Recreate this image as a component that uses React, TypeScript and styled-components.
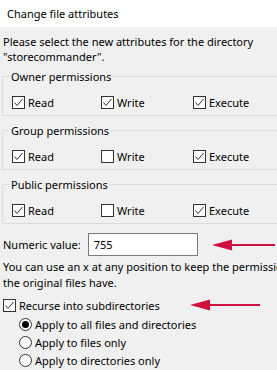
import styled, { createGlobalStyle } from 'styled-components';

const GlobalStyle = createGlobalStyle`
    html, body {
        margin: 0;
        padding: 0;
        background: #f0f0f0;
    }
    body {
        font-family: 'Noto Sans', 'Open Sans', sans-serif;
        font-size: 11px;
        color: #000;
    }
`;

interface CheckProps {
    checked?: boolean;
}

const CheckBox: React.FC<CheckProps> = ({ checked }) => (
    <Box>
        {checked && (
            <svg width="11" height="11" viewBox="0 0 11 11">
                <polyline points="1.5,5.5 4,8.5 9.5,2" fill="none" stroke="#333" strokeWidth="1" />
            </svg>
        )}
    </Box>
);

const Check: React.FC<{ label: string; checked?: boolean }> = ({ label, checked }) => (
    <CheckLabel>
        <CheckBox checked={checked} />
        <span>{label}</span>
    </CheckLabel>
);

const Arrow: React.FC<{ width: number }> = ({ width }) => (
    <svg width={width} height="12" viewBox={`0 0 ${width} 12`}>
        <line x1="16" y1="6" x2={width} y2="6" stroke="#d1103f" strokeWidth="2" />
        <polygon points="0,6 20,0.5 20,11.5" fill="#d1103f" />
    </svg>
);

const perms = [
    { title: 'Owner permissions', read: true, write: true, exec: true },
    { title: 'Group permissions', read: true, write: false, exec: true },
    { title: 'Public permissions', read: true, write: false, exec: true },
];

const App: React.FC = () => {
    return (
        <Window>
            <GlobalStyle />
            <TitleBar>Change file attributes</TitleBar>
            <Content>
                <Intro>
                    Please select the new attributes for the directory
                    <br />
                    "storecommander".
                </Intro>
                {perms.map((p) => (
                    <Group key={p.title}>
                        <Legend>{p.title}</Legend>
                        <CheckRow>
                            <Check label="Read" checked={p.read} />
                            <Check label="Write" checked={p.write} />
                            <Check label="Execute" checked={p.exec} />
                        </CheckRow>
                    </Group>
                ))}
                <NumericRow>
                    <span>Numeric value:</span>
                    <NumInput>755</NumInput>
                    <ArrowWrap $left={7}>
                        <Arrow width={63} />
                    </ArrowWrap>
                </NumericRow>
                <Help>
                    You can use an x at any position to keep the permission
                    <br />
                    the original files have.
                </Help>
                <RecurseRow>
                    <Check label="Recurse into subdirectories" checked />
                    <ArrowWrap $left={30}>
                        <Arrow width={70} />
                    </ArrowWrap>
                </RecurseRow>
                <RadioList>
                    <RadioItem>
                        <Radio $on />
                        <span>Apply to all files and directories</span>
                    </RadioItem>
                    <RadioItem>
                        <Radio />
                        <span>Apply to files only</span>
                    </RadioItem>
                    <RadioItem>
                        <Radio />
                        <span>Apply to directories only</span>
                    </RadioItem>
                </RadioList>
            </Content>
        </Window>
    );
};

export default App;

const Window = styled.div`
    width: 277px;
    height: 370px;
    overflow: hidden;
    background: #f0f0f0;
`;

const TitleBar = styled.div`
    height: 27px;
    background: #fff;
    display: flex;
    align-items: center;
    padding-left: 7px;
`;

const Content = styled.div`
    padding: 7px 0 0 2px;
    width: 300px;
`;

const Intro = styled.div`
    line-height: 15px;
    white-space: nowrap;
    padding-left: 1px;
`;

const Group = styled.fieldset`
    margin: 5px 0 0 0;
    width: 300px;
    box-sizing: border-box;
    border: 1px solid #dcdcdc;
    padding: 0 0 5px 6px;
    & + & {
        margin-top: 7px;
    }
`;

const Legend = styled.legend`
    padding: 0 2px;
    line-height: 15px;
`;

const CheckRow = styled.div`
    display: grid;
    grid-template-columns: 89px 92px auto;
    margin: 10px 0 0 3px;
`;

const CheckLabel = styled.label`
    display: flex;
    align-items: center;
    gap: 3px;
    height: 16px;
    white-space: nowrap;
`;

const Box = styled.span`
    width: 11px;
    height: 11px;
    border: 1px solid #333;
    background: #fff;
    display: flex;
    align-items: center;
    justify-content: center;
`;

const NumericRow = styled.div`
    display: flex;
    align-items: center;
    margin-top: 9px;
    padding-left: 1px;
    gap: 7px;
`;

const NumInput = styled.div`
    width: 103px;
    height: 21px;
    border: 1px solid #7a7a7a;
    background: #fff;
    display: flex;
    align-items: center;
    padding-left: 5px;
`;

const ArrowWrap = styled.span<{ $left: number }>`
    display: flex;
    margin-left: ${(p) => p.$left}px;
`;

const Help = styled.div`
    margin-top: 3px;
    padding-left: 1px;
    line-height: 16px;
    white-space: nowrap;
`;

const RecurseRow = styled.div`
    display: flex;
    align-items: center;
    margin-top: 6px;
    padding-left: 1px;
`;

const RadioList = styled.div`
    display: flex;
    flex-direction: column;
    padding: 2px 0 0 17px;
`;

const RadioItem = styled.label`
    display: flex;
    align-items: center;
    gap: 3px;
    height: 18px;
    white-space: nowrap;
`;

const Radio = styled.span<{ $on?: boolean }>`
    width: 11px;
    height: 11px;
    border: 1px solid #333;
    border-radius: 50%;
    background: #fff;
    display: flex;
    align-items: center;
    justify-content: center;
    &::after {
        content: '';
        width: 7px;
        height: 7px;
        border-radius: 50%;
        background: ${(p) => (p.$on ? '#000' : 'transparent')};
    }
`;
